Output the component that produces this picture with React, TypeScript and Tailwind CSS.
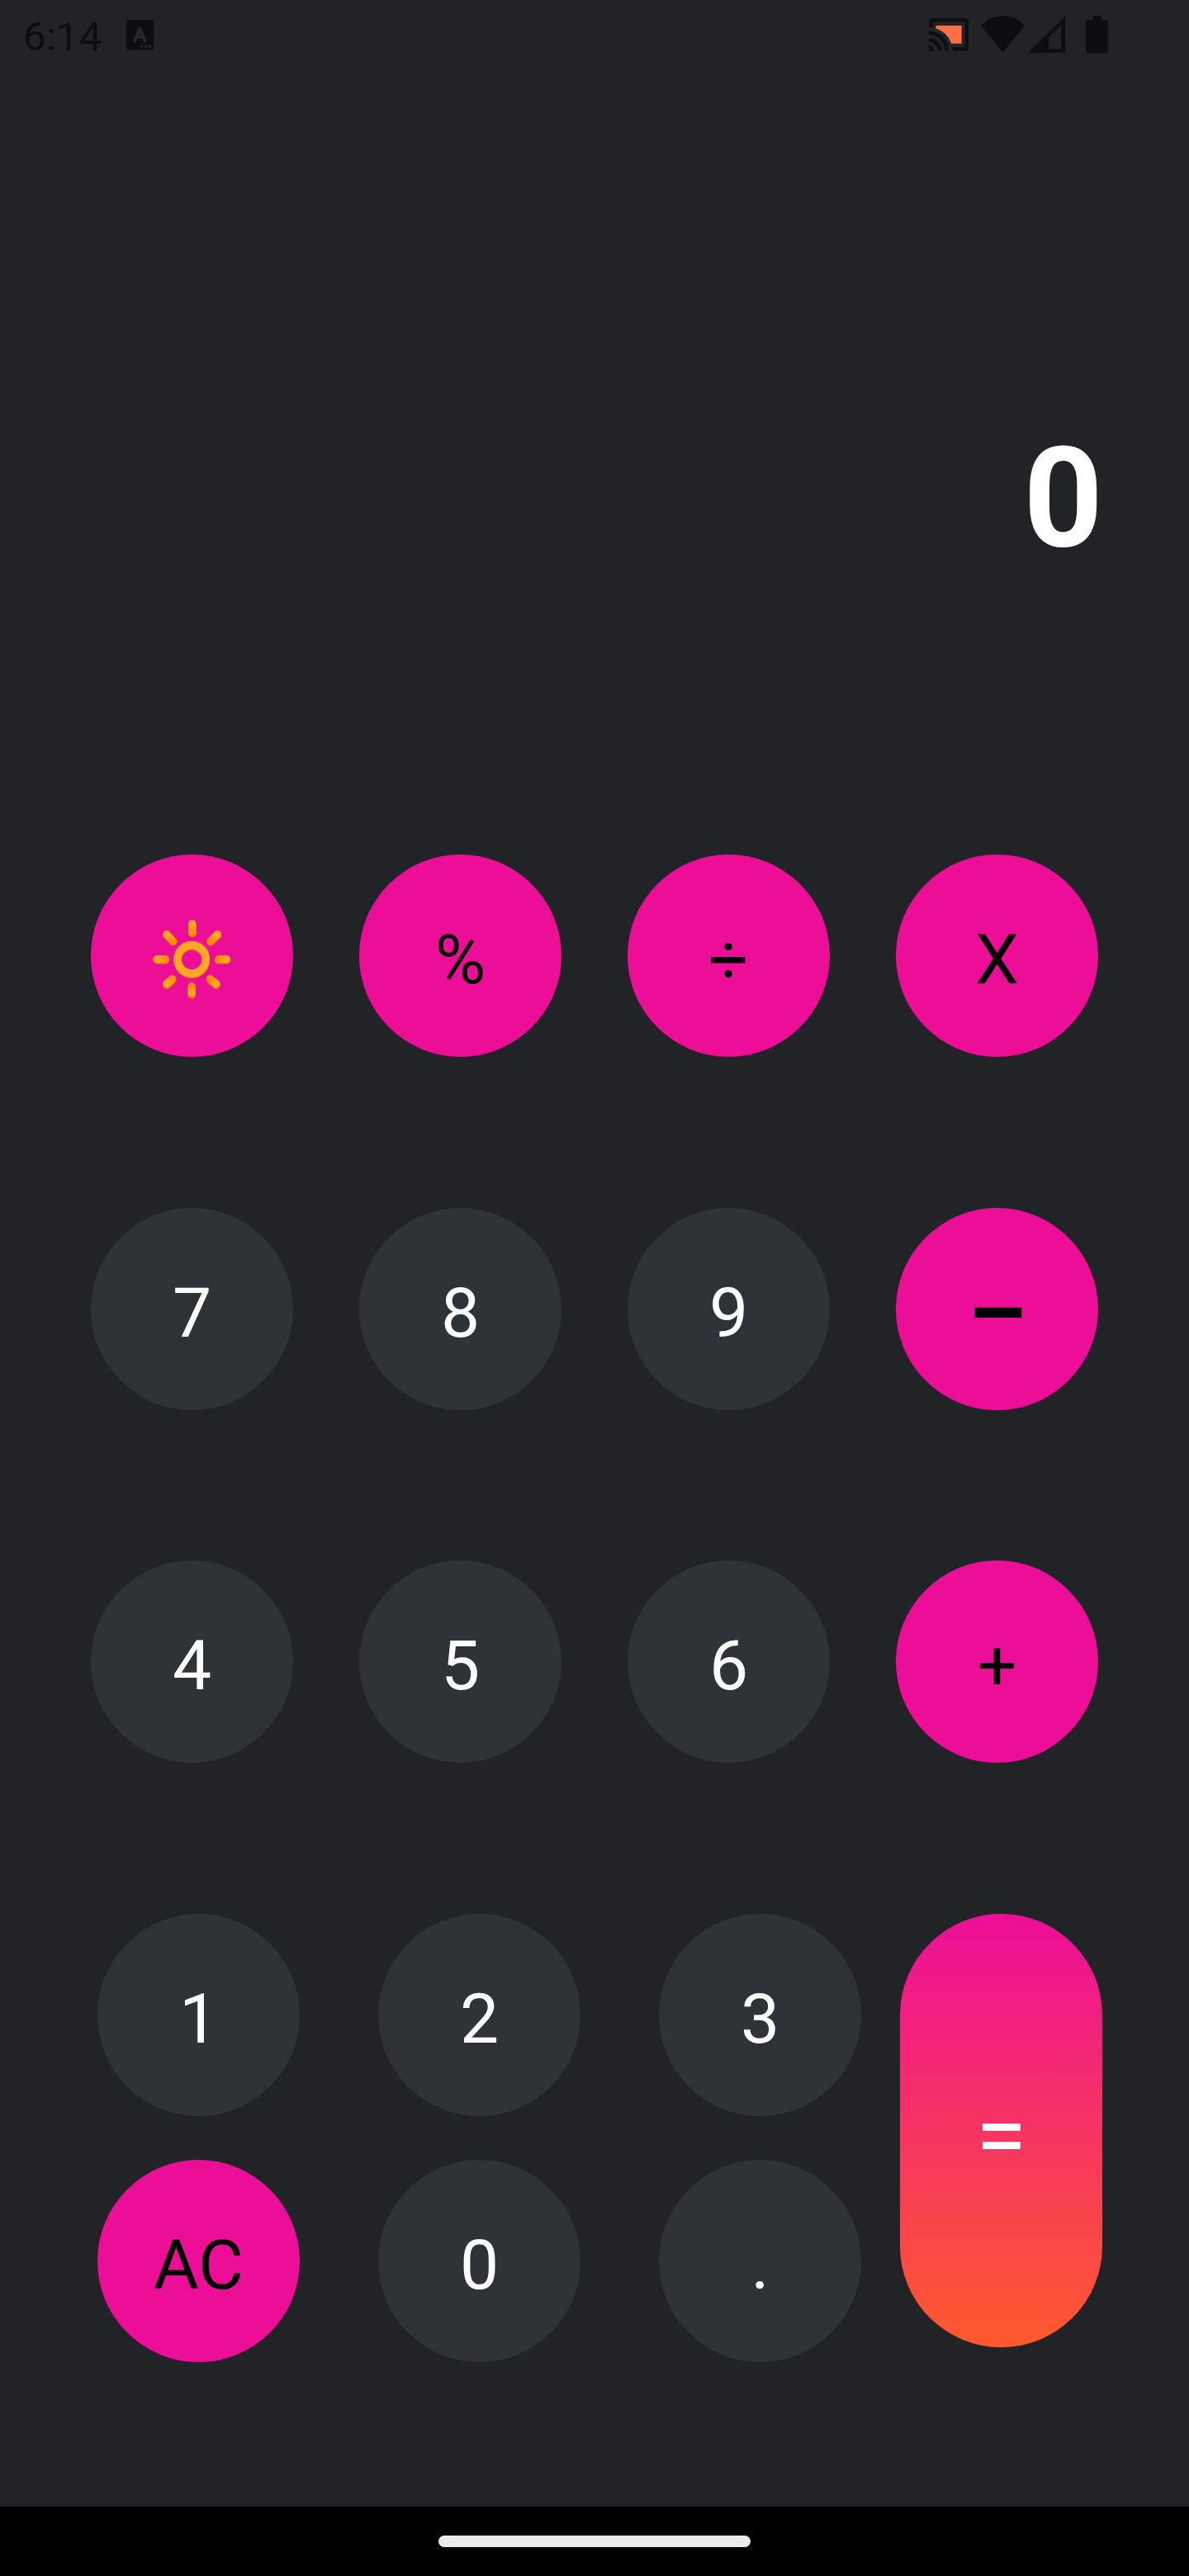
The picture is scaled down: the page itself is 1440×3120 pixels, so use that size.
import React from "react";

type Tone = "pink" | "dark";

const tones: Record<Tone, string> = {
  pink: "bg-[#ED0E98] text-black",
  dark: "bg-[#2F3236] text-white",
};

function Key({ tone = "dark", label, children }: { tone?: Tone; label?: string; children: React.ReactNode }) {
  return (
    <button
      aria-label={label}
      className={`flex size-[245px] items-center justify-center rounded-full pt-2.5 text-[84px] leading-none ${tones[tone]}`}
    >
      {children}
    </button>
  );
}

function SunIcon() {
  return (
    <svg viewBox="180.800 1108 104 108" className="-mt-[1px] h-[108px] w-[104px]" fill="none" strokeLinecap="round">
      <defs>
        <radialGradient id="ray" gradientUnits="userSpaceOnUse" cx="232" cy="1161.500" r="46">
          <stop offset="0.550" stopColor="#FF8F00" />
          <stop offset="0.720" stopColor="#FF8F0A" />
          <stop offset="0.900" stopColor="#FFA726" />
        </radialGradient>
      </defs>
      <g stroke="#F57C00" strokeWidth="9.800">
        <path d="M232.700 1119.500V1130.200M232 1195.500V1204.500M190 1162.600H200.200M264.500 1162.600H274.300M202 1132.500L209.500 1140.500M263 1132.500L255 1140.500M202 1193L208.500 1186.500M261.500 1193L254.500 1186.500" />
      </g>
      <g stroke="url(#ray)" strokeWidth="9.200">
        <path d="M232.700 1118.800L232.800 1129.500M232 1194.700L232.100 1202.500M189.800 1161.700L200 1161.800M264.500 1161.700L274.300 1161.800M201.700 1131.700L209 1139.500M263.300 1131.700L255 1139.500M201.500 1191.500L208.500 1185.500M261.800 1191.500L254.500 1185.500" />
      </g>
      <circle cx="232" cy="1163" r="17" stroke="#F57C00" strokeWidth="9.500" />
      <circle cx="232" cy="1161.700" r="17.200" stroke="#FFA726" strokeWidth="9.500" />
    </svg>
  );
}

function StatusBar() {
  return (
    <header className="flex h-[90px] items-start justify-between pl-7 pr-[98px] text-[#0D0E10]">
      <div className="flex items-start">
        <span className="w-[94px] whitespace-nowrap pt-4 text-[49px] leading-[57px] tracking-[0.200px]">6:14</span>
        <svg viewBox="0 0 33 37" className="ml-[31px] mt-6 h-[37px] w-[33px]">
          <rect width="33" height="36.500" rx="3.500" fill="currentColor" />
          <path d="M10.300 25L16.300 10.800L22.300 25M12.500 20.700H20.200" fill="none" stroke="#27282C" strokeWidth="4.200" strokeLinecap="round" strokeLinejoin="round" />
          <g fill="#27282C">
            <circle cx="18.700" cy="32.300" r="1.800" />
            <circle cx="23.700" cy="32.300" r="1.800" />
            <circle cx="28.700" cy="32.300" r="1.800" />
          </g>
        </svg>
      </div>
      <svg viewBox="1125 18 217 48" className="mt-[18px] h-12 w-[217px]" fill="currentColor">
        <path d="M1125 33V26q0-4 4-4H1169q4 0 4 4V57.500q0 4-4 4H1153.500V57.300H1168.700V26.500H1129.500V33Z" />
        <path d="M1133.500 31H1164.600V52.700H1152C1149.500 44 1142 37 1133.500 34.700Z" fill="#FF7043" />
        <path d="M1125 37.800A24 24 0 0 1 1149 61.700H1144.700A19.700 19.700 0 0 0 1125 42ZM1125 46.300A15.400 15.400 0 0 1 1140.300 61.700H1136A11 11 0 0 0 1125 50.700ZM1125 55A6.700 6.700 0 0 1 1131.700 61.700H1125Z" />
        <path d="M1214.500 63.300L1188 31.300C1195 24 1204 19 1214.500 19S1234 24 1241 31.300Z" />
        <path fillRule="evenodd" d="M1245.300 63.700L1290 19.700V63.700ZM1270 59.300H1285.300V30.300L1270 45.700Z" />
        <path d="M1323 19H1334V24H1339q3 0 3 3V61.500q0 3-3 3H1318q-3 0-3-3V27q0-3 3-3H1323Z" />
      </svg>
    </header>
  );
}

export default function App() {
  return (
    <div className="flex h-[3120px] w-[1440px] flex-col bg-[#222327] font-['Roboto',sans-serif]">
      <StatusBar />
      <output className="flex h-[945px] justify-end pr-[104px] pt-[415px] text-[168px] font-bold leading-[197px] text-white">0</output>
      <main className="flex flex-1 flex-col">
        <div className="grid grid-cols-[repeat(4,245px)] grid-rows-[428px_427px_245px] items-start gap-x-20 pl-[110px]">
          <Key tone="pink" label="Brightness"><SunIcon /></Key>
          <Key tone="pink">%</Key>
          <Key tone="pink">÷</Key>
          <Key tone="pink">X</Key>
          <Key>7</Key>
          <Key>8</Key>
          <Key>9</Key>
          <Key tone="pink"><span className="text-[112px] font-bold leading-none">–</span></Key>
          <Key>4</Key>
          <Key>5</Key>
          <Key>6</Key>
          <Key tone="pink">+</Key>
        </div>
        <div className="mt-[183px] flex pl-[118px]">
          <div className="grid grid-cols-[repeat(3,245px)] gap-x-[95px] gap-y-[53px]">
            <Key>1</Key>
            <Key>2</Key>
            <Key>3</Key>
            <Key tone="pink">AC</Key>
            <Key>0</Key>
            <Key>.</Key>
          </div>
          <button className="ml-[47px] flex h-[525px] w-[245px] items-center justify-center rounded-full bg-linear-to-b/srgb from-[#ED0E98] to-[#FE5A2D] pt-3 text-[112px] leading-none text-white">=</button>
        </div>
      </main>
      <footer className="flex h-[84px] items-start justify-center bg-black pt-[35px]">
        <div className="h-3.5 w-[378px] rounded-full bg-[#EBEBEB]" />
      </footer>
    </div>
  );
}
